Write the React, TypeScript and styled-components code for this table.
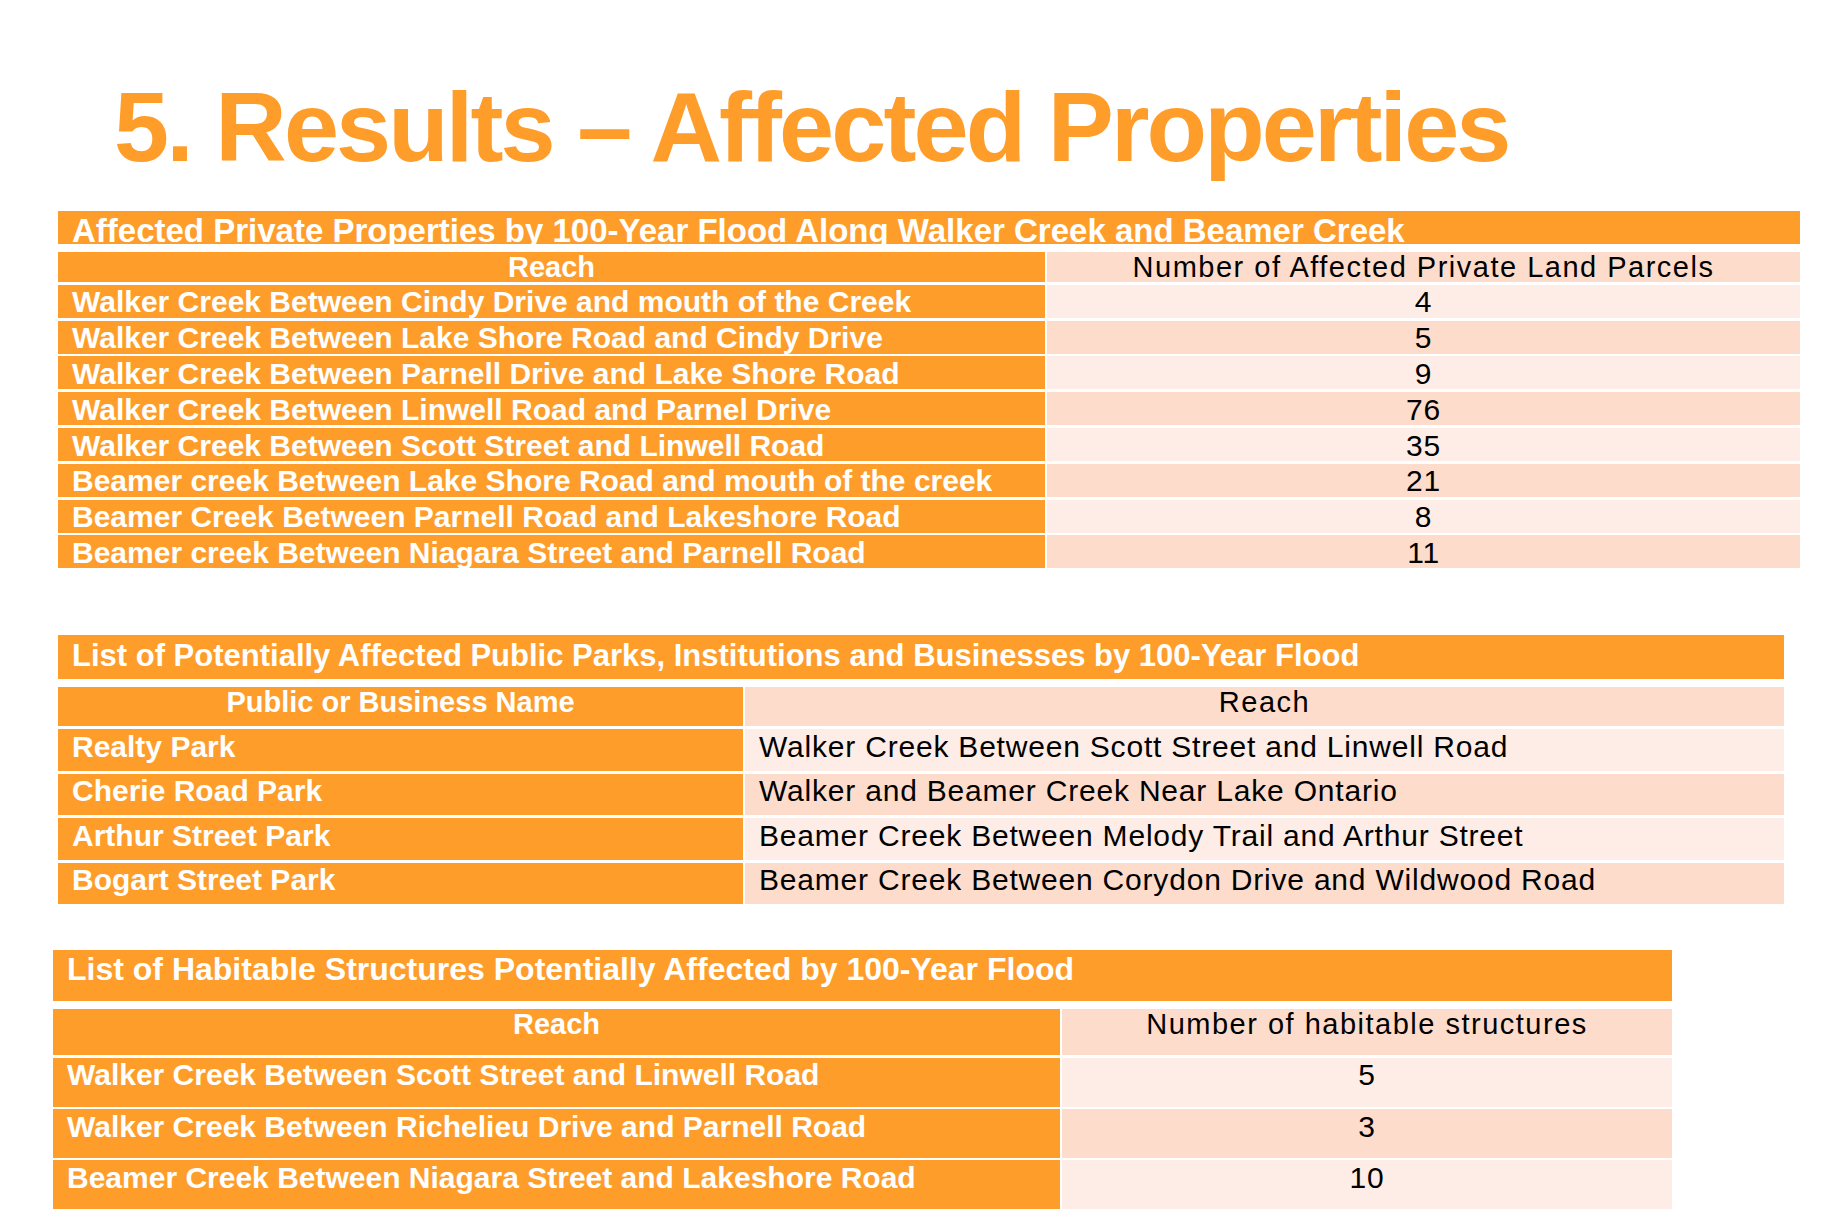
import React from "react";
import styled, { createGlobalStyle } from "styled-components";

const ORANGE = "#FF9D2B";
const PINK_DARK = "#FDDCCB";
const PINK_LIGHT = "#FEEDE6";

const GlobalStyle = createGlobalStyle`
  html, body {
    margin: 0;
    padding: 0;
    background: #ffffff;
  }
  body {
    font-family: "Liberation Sans", Arial, sans-serif;
  }
`;

const Slide = styled.div`
  width: 1822px;
  height: 1232px;
  overflow: hidden;
  background: #ffffff;
  display: flex;
  flex-direction: column;
  align-items: flex-start;
`;

const Heading = styled.h1`
  margin: 77px 0 0 114px;
  font-size: 99px;
  line-height: 99px;
  font-weight: 700;
  letter-spacing: -2.9px;
  color: ${ORANGE};
  white-space: nowrap;
`;

const Block = styled.section<{ $top: number; $left: number }>`
  margin: ${(p) => p.$top}px 0 0 ${(p) => p.$left}px;
  display: flex;
  flex-direction: column;
`;

const Caption = styled.div<{ $height: number; $size: number; $pad: number }>`
  height: ${(p) => p.$height}px;
  box-sizing: border-box;
  padding: ${(p) => p.$pad}px 14px 0;
  background: ${ORANGE};
  color: #ffffff;
  font-weight: 700;
  font-size: ${(p) => p.$size}px;
  line-height: ${(p) => p.$size}px;
  white-space: nowrap;
  margin-bottom: 8px;
`;

const Grid = styled.div<{ $cols: [number, number]; $head: number; $row: number; $gap: number }>`
  display: grid;
  grid-template-columns: ${(p) => p.$cols[0]}px ${(p) => p.$cols[1]}px;
  grid-auto-rows: ${(p) => p.$row}px;
  grid-template-rows: ${(p) => p.$head}px;
  column-gap: 2px;
  row-gap: ${(p) => p.$gap}px;
`;

const NameCell = styled.div<{ $head?: boolean }>`
  background: ${ORANGE};
  color: #ffffff;
  font-weight: 700;
  font-size: ${(p) => (p.$head ? 29 : 30)}px;
  line-height: ${(p) => (p.$head ? 30 : 30)}px;
  padding: ${(p) => (p.$head ? "0" : "2.6px 14px 0")};
  text-align: ${(p) => (p.$head ? "center" : "left")};
  white-space: nowrap;
`;

const ValueCell = styled.div<{ $shade: "dark" | "light"; $head?: boolean; $align: "center" | "left" }>`
  background: ${(p) => (p.$shade === "dark" ? PINK_DARK : PINK_LIGHT)};
  color: #000000;
  font-size: ${(p) => (p.$head ? 29 : 30)}px;
  line-height: 30px;
  letter-spacing: ${(p) => (p.$head ? 1.5 : 0.8)}px;
  padding: ${(p) => (p.$head ? "0" : "2.6px 14px 0")};
  text-align: ${(p) => (p.$head ? "center" : p.$align)};
  white-space: nowrap;
`;

type TableSpec = {
  top: number;
  left: number;
  title: string;
  caption: { height: number; size: number; pad: number };
  cols: [number, number];
  head: [string, string];
  headHeight: number;
  rowHeight: number;
  gap: number;
  align: "center" | "left";
  rows: [string, string][];
};

const tables: TableSpec[] = [
  {
    top: 35,
    left: 58,
    title:
      "Affected Private Properties by 100-Year Flood Along Walker Creek and Beamer Creek",
    caption: { height: 33, size: 33, pad: 3 },
    cols: [987, 753],
    head: ["Reach", "Number of Affected Private Land Parcels"],
    headHeight: 30,
    rowHeight: 33,
    gap: 2.8,
    align: "center",
    rows: [
      ["Walker Creek Between Cindy Drive and mouth of the Creek", "4"],
      ["Walker Creek Between Lake Shore Road and Cindy Drive", "5"],
      ["Walker Creek Between Parnell Drive and Lake Shore Road", "9"],
      ["Walker Creek Between Linwell Road and Parnel Drive", "76"],
      ["Walker Creek Between Scott Street and Linwell Road", "35"],
      ["Beamer creek Between Lake Shore Road and mouth of the creek", "21"],
      ["Beamer Creek Between Parnell Road and Lakeshore Road", "8"],
      ["Beamer creek Between Niagara Street and Parnell Road", "11"],
    ],
  },
  {
    top: 67,
    left: 58,
    title:
      "List of Potentially Affected Public Parks, Institutions and Businesses by 100-Year Flood",
    caption: { height: 44, size: 31, pad: 5 },
    cols: [685, 1039],
    head: ["Public or Business Name", "Reach"],
    headHeight: 39,
    rowHeight: 41.5,
    gap: 3,
    align: "left",
    rows: [
      ["Realty Park", "Walker Creek Between Scott Street and Linwell Road"],
      ["Cherie Road Park", "Walker and Beamer Creek Near Lake Ontario"],
      ["Arthur Street Park", "Beamer Creek Between Melody Trail and Arthur Street"],
      ["Bogart Street Park", "Beamer Creek Between Corydon Drive and Wildwood Road"],
    ],
  },
  {
    top: 46,
    left: 53,
    title: "List of Habitable Structures Potentially Affected by 100-Year Flood",
    caption: { height: 51, size: 32, pad: 3 },
    cols: [1007, 610],
    head: ["Reach", "Number of habitable structures"],
    headHeight: 46,
    rowHeight: 48.7,
    gap: 2.5,
    align: "center",
    rows: [
      ["Walker Creek Between Scott Street and Linwell Road", "5"],
      ["Walker Creek Between Richelieu Drive and Parnell Road", "3"],
      ["Beamer Creek Between Niagara Street and Lakeshore Road", "10"],
    ],
  },
];

const FloodTable: React.FC<{ spec: TableSpec }> = ({ spec }) => (
  <Block $top={spec.top} $left={spec.left}>
    <Caption
      $height={spec.caption.height}
      $size={spec.caption.size}
      $pad={spec.caption.pad}
    >
      {spec.title}
    </Caption>
    <Grid
      $cols={spec.cols}
      $head={spec.headHeight}
      $row={spec.rowHeight}
      $gap={spec.gap}
    >
      <NameCell $head>{spec.head[0]}</NameCell>
      <ValueCell $head $shade="dark" $align="center">
        {spec.head[1]}
      </ValueCell>
      {spec.rows.map(([name, value], i) => (
        <React.Fragment key={name}>
          <NameCell>{name}</NameCell>
          <ValueCell $shade={i % 2 === 0 ? "light" : "dark"} $align={spec.align}>
            {value}
          </ValueCell>
        </React.Fragment>
      ))}
    </Grid>
  </Block>
);

export default function App() {
  return (
    <>
      <GlobalStyle />
      <Slide>
        <Heading>5. Results – Affected Properties</Heading>
        {tables.map((t) => (
          <FloodTable key={t.title} spec={t} />
        ))}
      </Slide>
    </>
  );
}
